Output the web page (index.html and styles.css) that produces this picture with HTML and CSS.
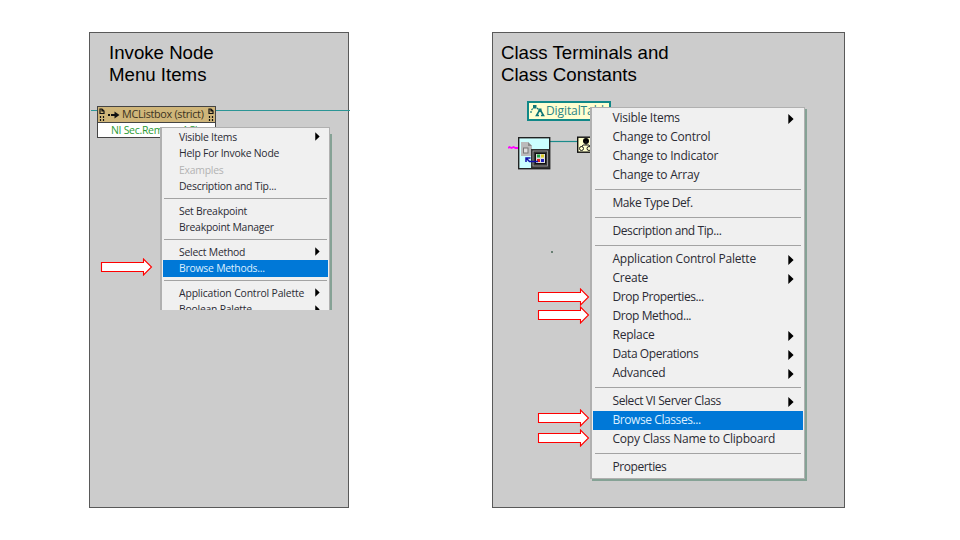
FILE: index.html
```
<!DOCTYPE html>
<html lang="en">
<head>
<meta charset="utf-8">
<title>Menu Items</title>
<link rel="stylesheet" href="styles.css">
</head>
<body>
<svg class="defs" width="0" height="0">
  <symbol id="arrow" viewBox="0 0 53 18"><path d="M1.5 4.5H43.5V1L51.5 9L43.5 17V13.5H1.5Z" fill="#fff" stroke="#f00" stroke-width="1.1"/></symbol>
  <symbol id="tri" viewBox="0 0 6 10"><path d="M.3 0L5.6 5L.3 10Z" fill="#000"/></symbol>
</svg>
<main class="slide">
  <section class="panel panel-left">
    <h2>Invoke Node<br>Menu Items</h2>
    <div class="wire wire-left"></div>
    <div class="invoke">
      <div class="invoke-head">
        <svg class="grip" viewBox="0 0 6 14"><path d="M1 1V5.5H5V3L3 1ZM3 1V3H5M1.500 8V10M4.500 8V10M1.500 11V13M4.500 11V13" fill="none" stroke="#111" stroke-width="1.2"/></svg>
        <svg class="call" viewBox="0 0 12 8"><path d="M0 4H2M3 4H8" stroke="#111" stroke-width="2"/><path d="M6.500 .5L11.500 4L6.500 7.500Z" fill="#111"/></svg>
        <span>MCListbox (strict)</span>
        <svg class="grip grip-end" viewBox="0 0 6 14"><path d="M1 1V5.5H5V3L3 1ZM3 1V3H5M1.500 8V10M4.500 8V10M1.500 11V13M4.500 11V13" fill="none" stroke="#111" stroke-width="1.2"/></svg>
      </div>
      <div class="invoke-method">NI Sec.Remove ACL</div>
    </div>
    <div class="clip">
      <ul class="menu small">
        <li><span>Visible Items</span><svg><use href="#tri"/></svg></li>
        <li><span>Help For Invoke Node</span></li>
        <li class="off"><span>Examples</span></li>
        <li><span>Description and Tip...</span></li>
        <li class="sep"></li>
        <li><span>Set Breakpoint</span></li>
        <li><span>Breakpoint Manager</span></li>
        <li class="sep"></li>
        <li><span>Select Method</span><svg><use href="#tri"/></svg></li>
        <li class="on"><span>Browse Methods...</span></li>
        <li class="sep"></li>
        <li><span class="wide">Application Control Palette</span><svg><use href="#tri"/></svg></li>
        <li><span>Boolean Palette</span><svg><use href="#tri"/></svg></li>
      </ul>
    </div>
    <svg class="arrow a1"><use href="#arrow"/></svg>
  </section>
  <section class="panel panel-right">
    <h2>Class Terminals and<br>Class Constants</h2>
    <div class="constant">
      <svg viewBox="0 0 15 12"><path d="M1 8V6L3 3M7 3L9 5" fill="none" stroke="#177" stroke-width="1.200" stroke-dasharray="2 1"/><rect x="3" y="0" width="3.500" height="3.500" fill="#177"/><path d="M10 4.500L13.500 10.500H11M10 4.500L6.500 10.500H9" fill="none" stroke="#177" stroke-width="1.600"/><rect x="8.500" y="3.500" width="3" height="3" fill="#177"/></svg>
      <span>DigitalTable</span>
    </div>
    <svg class="nodes" viewBox="0 0 84 34">
      <path d="M0 12l1.500-1 2 1 2-1 2 1H10" fill="none" stroke="#f0f" stroke-width="1.800"/>
      <path d="M42 5.500H70" stroke="#1a8b8b" stroke-width="1.200"/>
      <rect x="10.700" y="1.700" width="31" height="31" fill="#cff" stroke="#222" stroke-width="1.400"/>
      <path d="M13 6H20L24 10V20H13Z" fill="#bbb"/><path d="M20 6V10H24Z" fill="#888"/><rect x="15.500" y="12" width="4.500" height="5" fill="#ddd" stroke="#777"/>
      <rect x="23" y="13" width="18.500" height="19" fill="#333"/><rect x="25" y="15" width="14.500" height="15" fill="none" stroke="#aaa" stroke-width=".8"/><rect x="27.500" y="17.500" width="10" height="10" fill="#ddd" stroke="#111"/>
      <rect x="29" y="18.500" width="3" height="3" fill="#2a4"/><rect x="33" y="18.500" width="3" height="3" fill="#dc2"/><rect x="29" y="23" width="3" height="3" fill="#d22"/><rect x="33" y="23" width="3" height="3" fill="#22b"/>
      <path d="M18 22L21.500 25.500H30M18 26V22H22.500" fill="none" stroke="#11a" stroke-width="1.500"/>
      <rect x="69.700" y="1.200" width="16" height="15" fill="#ffc" stroke="#111" stroke-width="1.400"/>
      <circle cx="78" cy="5" r="3" fill="#000"/><path d="M78 5V9M73.500 11L75 9H81L82.500 11" fill="none" stroke="#222"/><circle cx="73.500" cy="12.500" r="2" fill="none" stroke="#222"/><circle cx="81" cy="12.500" r="2" fill="none" stroke="#222"/>
    </svg>
    <div class="speck"></div>
    <ul class="menu large">
      <li><span>Visible Items</span><svg><use href="#tri"/></svg></li>
      <li><span class="wide">Change to Control</span></li>
      <li><span class="wide">Change to Indicator</span></li>
      <li><span class="wide">Change to Array</span></li>
      <li class="sep"></li>
      <li><span class="tight">Make Type Def.</span></li>
      <li class="sep"></li>
      <li><span class="tight">Description and Tip...</span></li>
      <li class="sep"></li>
      <li><span class="wide">Application Control Palette</span><svg><use href="#tri"/></svg></li>
      <li><span>Create</span><svg><use href="#tri"/></svg></li>
      <li><span class="tight">Drop Properties...</span></li>
      <li><span class="tight">Drop Method...</span></li>
      <li><span>Replace</span><svg><use href="#tri"/></svg></li>
      <li><span class="tight">Data Operations</span><svg><use href="#tri"/></svg></li>
      <li><span>Advanced</span><svg><use href="#tri"/></svg></li>
      <li class="sep"></li>
      <li><span class="tight">Select VI Server Class</span><svg><use href="#tri"/></svg></li>
      <li class="on"><span class="tight">Browse Classes...</span></li>
      <li><span class="wide">Copy Class Name to Clipboard</span></li>
      <li class="sep"></li>
      <li><span class="tight">Properties</span></li>
    </ul>
    <svg class="arrow a2"><use href="#arrow"/></svg>
    <svg class="arrow a3"><use href="#arrow"/></svg>
    <svg class="arrow a4"><use href="#arrow"/></svg>
    <svg class="arrow a5"><use href="#arrow"/></svg>
  </section>
</main>
</body>
</html>
```
FILE: styles.css
```
* { box-sizing: border-box; }
body { margin: 0; background: #fff; }
.defs { position: absolute; }
.slide { display: flex; gap: 143px; width: 960px; height: 540px; padding: 32px 0 0 89px; overflow: hidden; }
.panel { position: relative; height: 476px; background: #ccc; border: 1px solid #595959; }
.panel-left { width: 260px; }
.panel-right { width: 353px; }
h2 { margin: 0; font: 400 18.67px/22px "Liberation Sans", sans-serif; color: #000; }
.panel-left h2 { padding: 9px 0 0 19px; }
.panel-right h2 { padding: 9px 0 0 8px; }

.wire-left { position: absolute; left: 1px; top: 77px; width: 259px; height: 1px; background: #2b9595; }
.invoke { position: absolute; left: 7px; top: 73px; width: 119px; height: 32px; background: #fff; border: 1.4px solid #444; font-family: "Open Sans", sans-serif; font-weight: 500; white-space: nowrap; }
.invoke-head { display: flex; align-items: center; height: 16px; background: #cfb579; border-bottom: 1px solid #444; font-size: 10.8px; line-height: 14px; letter-spacing: -.3px; color: #3b321f; padding: 0 1px; }
.invoke-head span { position: relative; top: -1px; }
.grip { width: 6px; height: 14px; flex: none; }
.grip-end { margin-left: auto; }
.call { width: 12px; height: 8px; margin: 0 2px 0 3px; flex: none; }
.invoke-method { padding-left: 13px; font-size: 10.5px; line-height: 14px; letter-spacing: -.3px; color: #2c9c35; }

.clip { position: absolute; left: 70px; top: 94px; width: 175px; height: 183px; overflow: hidden; }
.menu { list-style: none; margin: 0; background: #f0f0f0; border: 1px solid #b0b0b0; border-left-width: 2px; font-family: "Open Sans", sans-serif; font-weight: 500; color: #2b2b34; }
.menu li { display: flex; align-items: center; justify-content: space-between; white-space: nowrap; }
.menu .on { background: #0078d7; color: #dcefff; }
.menu .off { color: #b3b3b3; }
.menu .sep::before { content: ""; flex: 1; height: 1px; background: #a3a3a3; }

.small { width: 170px; padding: .5px 0 0 1px; box-shadow: 2px 7px 0 #85a295; font-size: 10.4px; letter-spacing: -.23px; }
.small .wide { letter-spacing: -.15px; }
.small li { height: 16.5px; padding: 0 8px 0 16px; margin-right: 1px; }
.small .sep { height: 8px; padding: 0 1px; }
.small svg { width: 5px; height: 9px; }

.large { position: absolute; left: 97px; top: 74px; width: 215px; height: 372px; padding: 1px 1px 0; box-shadow: 2px 2px 0 #85a295; font-size: 12px; letter-spacing: -.23px; }
.large span { position: relative; top: -1px; left: .5px; }
.large .wide { letter-spacing: -.22px; }
.large .tight { letter-spacing: -.42px; }
.large li { height: 19px; padding: 0 9px 0 19px; }
.large .sep { height: 9px; padding: 0 2px; }
.large svg { width: 6px; height: 10px; }

.constant { position: absolute; left: 34px; top: 68px; width: 84px; height: 20px; display: flex; align-items: center; background: #ffffd0; border: 2px solid #118888; padding-left: 1px; font: 500 12px "Open Sans", sans-serif; letter-spacing: -.1px; color: #2b8585; white-space: nowrap; overflow: hidden; }
.constant svg { width: 15px; height: 12px; margin-right: 1px; flex: none; }
.constant span { position: relative; top: -1px; }
.nodes { position: absolute; left: 15px; top: 103px; width: 84px; height: 34px; }
.speck { position: absolute; left: 58px; top: 218px; width: 2px; height: 2px; background: #687f73; }

.arrow { position: absolute; width: 53px; height: 18px; }
.a1 { left: 10px; top: 225px; }
.a2 { left: 44px; top: 255px; }
.a3 { left: 44px; top: 273px; }
.a4 { left: 44px; top: 376px; }
.a5 { left: 44px; top: 396px; }
```
